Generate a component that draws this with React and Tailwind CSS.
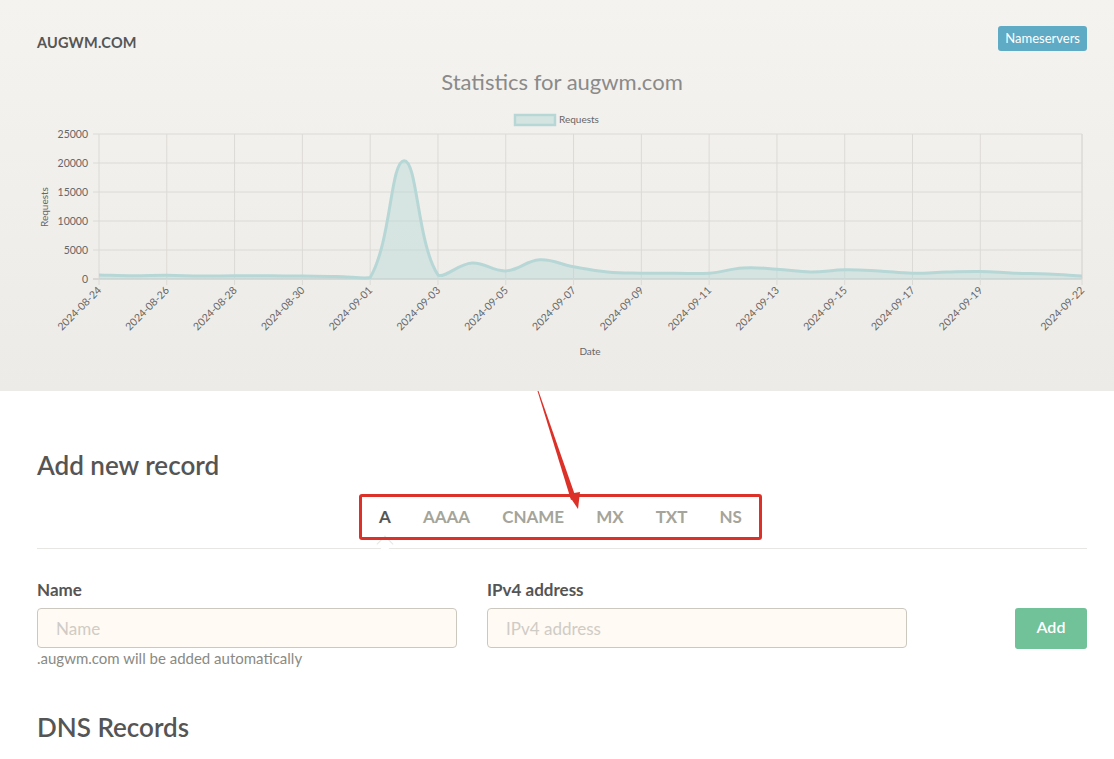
import React from 'react';

const FONT = { fontFamily: 'Lato, "Open Sans", sans-serif' };

// daily request counts, 2024-08-24 .. 2024-09-22
const values = [
  700, 550, 650, 500, 550, 550, 500, 450, 250, 20400,
  700, 2750, 1400, 3300, 2100, 1200, 1000, 1000, 1000, 1900,
  1700, 1200, 1600, 1400, 1000, 1200, 1300, 1000, 850, 500,
];

const X0 = 99;
const X1 = 1082;
const Y_TOP = 134;
const Y_ZERO = 279;
const STEP = (X1 - X0) / (values.length - 1);
const yOf = (v) => Y_ZERO - (v / 25000) * (Y_ZERO - Y_TOP);

const tickDays = [0, 2, 4, 6, 8, 10, 12, 14, 16, 18, 20, 22, 24, 26, 29];
const dayLabel = (i) => {
  const d = new Date(2024, 7, 24 + i);
  const mm = String(d.getMonth() + 1).padStart(2, '0');
  const dd = String(d.getDate()).padStart(2, '0');
  return `2024-${mm}-${dd}`;
};

// chart.js style spline (tension 0.4)
function splinePath(pts) {
  const t = 0.4;
  const cps = pts.map((p, i) => {
    const prev = pts[i - 1] || p;
    const next = pts[i + 1] || p;
    const d01 = Math.hypot(p.x - prev.x, p.y - prev.y);
    const d12 = Math.hypot(next.x - p.x, next.y - p.y);
    const s01 = d01 / (d01 + d12 || 1);
    const s12 = d12 / (d01 + d12 || 1);
    const fa = t * s01;
    const fb = t * s12;
    return {
      c1: { x: p.x - fa * (next.x - prev.x), y: p.y - fa * (next.y - prev.y) },
      c2: { x: p.x + fb * (next.x - prev.x), y: p.y + fb * (next.y - prev.y) },
    };
  });
  let d = `M${pts[0].x},${pts[0].y}`;
  for (let i = 1; i < pts.length; i++) {
    const a = cps[i - 1].c2;
    const b = cps[i].c1;
    d += ` C${a.x},${Math.min(a.y, Y_ZERO)} ${b.x},${Math.min(b.y, Y_ZERO)} ${pts[i].x},${pts[i].y}`;
  }
  return d;
}

function Chart() {
  const pts = values.map((v, i) => ({ x: X0 + i * STEP, y: yOf(v) }));
  const line = splinePath(pts);
  const area = `${line} L${X1},${Y_ZERO} L${X0},${Y_ZERO} Z`;
  const yTicks = [0, 5000, 10000, 15000, 20000, 25000];

  return (
    <svg width="1050" height="250" viewBox="37 110 1050 250" className="block" style={FONT}>
      {/* legend */}
      <rect x="515" y="115" width="40" height="10" fill="rgba(182,215,214,0.5)" stroke="#b6d7d6" strokeWidth="2.5" />
      <text x="559" y="123" fontSize="10" fill="#666">Requests</text>

      {/* grid */}
      {yTicks.map((v) => (
        <g key={v}>
          <line x1={X0 - 6} x2={X1} y1={yOf(v)} y2={yOf(v)} stroke={v === 0 ? '#c4c2be' : '#dcdad6'} strokeWidth="1" />
          <text x="88" y={yOf(v) + 3.5} fontSize="10.5" fill="#666" textAnchor="end">{v}</text>
        </g>
      ))}
      {tickDays.map((i) => {
        const x = X0 + i * STEP;
        return (
          <g key={i}>
            <line x1={x} x2={x} y1={Y_TOP} y2={Y_ZERO + 6} stroke="#dcdad6" strokeWidth="1" />
            <text
              x={x + 3}
              y={Y_ZERO + 12}
              fontSize="10.5"
              fill="#666"
              textAnchor="end"
              transform={`rotate(-45 ${x + 3} ${Y_ZERO + 12})`}
            >
              {dayLabel(i)}
            </text>
          </g>
        );
      })}
      <line x1={X1} x2={X1} y1={Y_TOP} y2={Y_ZERO} stroke="#dcdad6" />

      {/* data */}
      <path d={area} fill="rgba(182,215,214,0.45)" />
      <path d={line} fill="none" stroke="#b6d7d6" strokeWidth="3" />

      {/* axis titles */}
      <text x="48" y="207" fontSize="10" fill="#666" textAnchor="middle" transform="rotate(-90 48 207)">Requests</text>
      <text x="590" y="355" fontSize="10" fill="#666" textAnchor="middle">Date</text>
    </svg>
  );
}

const tabs = ['A', 'AAAA', 'CNAME', 'MX', 'TXT', 'NS'];

export default function App() {
  return (
    <div className="relative min-h-[759px] bg-white text-[#555]" style={FONT}>
      {/* stats header */}
      <header className="h-[391px] bg-gradient-to-b from-[#f5f3f0] to-[#edebe7] pl-[37px] pr-[27px] pt-[26px]">
        <div className="flex items-start justify-between h-[25px]">
          <span className="mt-[9px] text-[14.5px] leading-[16px] font-bold tracking-[0.2px] text-[#555]">AUGWM.COM</span>
          <button className="h-[25px] rounded-[3px] bg-[#5faac4] px-[7px] text-[13px] text-white">Nameservers</button>
        </div>
        <h2 className="mt-[17px] text-center text-[22px] leading-[28px] text-[#8a8a8a]">Statistics for augwm.com</h2>
        <div className="mt-[14px]">
          <Chart />
        </div>
      </header>

      <main className="pl-[37px] pr-[27px]">
        <h2 className="mt-[58px] text-[26px] leading-[32px] font-semibold text-[#555]">Add new record</h2>

        {/* record type tabs */}
        <div className="relative mt-[13px] h-[55px] border-b border-[#e8e6e3]">
          <div className="flex justify-center">
            <div className="relative -ml-[3px] flex h-[46px] items-center">
              {tabs.map((t, i) => (
                <span
                  key={t}
                  className={`relative px-[16px] text-[17px] font-bold ${i === 0 ? 'text-[#555]' : 'text-[#a5a49a]'}`}
                >
                  {t}
                  {i === 0 && (
                    <span className="absolute left-1/2 top-[34px] h-[12px] w-[12px] -translate-x-1/2 rotate-45 border-l border-t border-[#e8e6e3] bg-white" />
                  )}
                </span>
              ))}
              <div className="pointer-events-none absolute -left-[4px] -right-[4px] top-0 bottom-0 rounded-[3px] border-[3px] border-[#dc3128]" />
            </div>
          </div>
        </div>

        {/* form */}
        <div className="mt-[31px] flex items-start">
          <div className="w-[420px]">
            <label className="block text-[17px] leading-[20px] font-bold text-[#555]">Name</label>
            <input
              placeholder="Name"
              className="mt-[8px] h-[40px] w-full rounded-[4px] border border-[#ccc8c0] bg-[#fffaf3] px-[18px] text-[17px] placeholder:text-[#cfccc6] outline-none"
            />
            <p className="text-[15px] leading-[21px] text-[#8a8a85]">.augwm.com will be added automatically</p>
          </div>
          <div className="ml-[30px] w-[420px]">
            <label className="block text-[17px] leading-[20px] font-bold text-[#555]">IPv4 address</label>
            <input
              placeholder="IPv4 address"
              className="mt-[8px] h-[40px] w-full rounded-[4px] border border-[#ccc8c0] bg-[#fffaf3] px-[18px] text-[17px] placeholder:text-[#cfccc6] outline-none"
            />
          </div>
          <button className="ml-auto mt-[28px] h-[41px] w-[72px] rounded-[3px] bg-[#71c199] pb-[3px] text-[16px] font-semibold text-white">
            Add
          </button>
        </div>

        <h2 className="mt-[41px] text-[26px] leading-[34px] font-semibold text-[#555]">DNS Records</h2>
      </main>

      {/* annotation arrow */}
      <svg className="pointer-events-none absolute left-0 top-0" width="1114" height="759">
        <polygon points="537.5,391 538.5,391 576,498 571,500" fill="#dc3128" />
        <polygon points="568,494 580,492 578,509" fill="#dc3128" />
      </svg>
    </div>
  );
}
